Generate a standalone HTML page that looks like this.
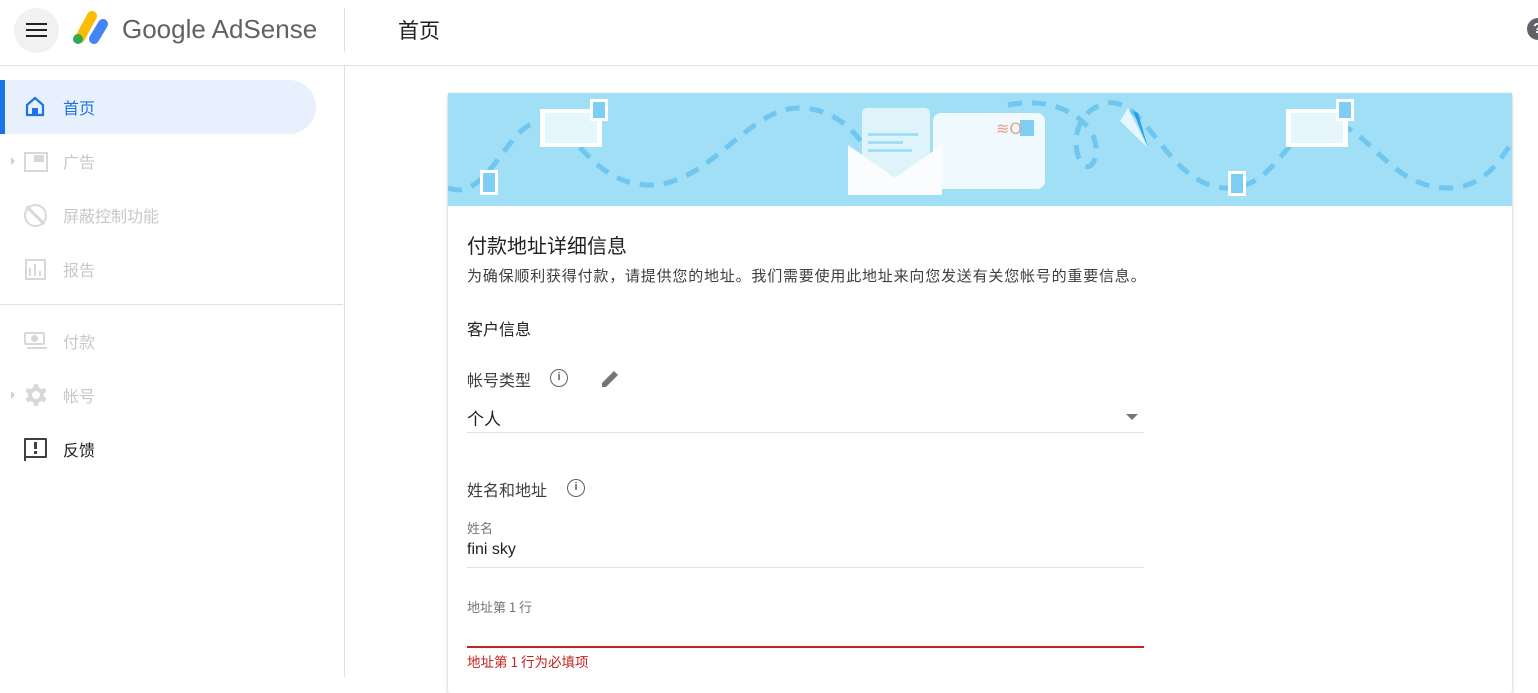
<!DOCTYPE html>
<html><head><meta charset="utf-8"><style>
*{margin:0;padding:0;box-sizing:border-box}
body{width:1538px;height:677px;overflow:hidden;background:#fff;font-family:"Liberation Sans","Noto Sans CJK SC",sans-serif;color:#202124;position:relative}
.a{position:absolute}
.t{position:absolute;white-space:nowrap}
.cjk{font-family:"Noto Sans CJK SC","Liberation Sans",sans-serif}
.nav{font-size:16px;color:#c8c8c8}
</style></head><body>
<!-- header -->
<div class="a" style="left:14px;top:8px;width:45px;height:45px;border-radius:50%;background:#f1f1f1"></div>
<div class="a" style="left:26px;top:23px;width:21px;height:2px;background:#202124"></div>
<div class="a" style="left:26px;top:29px;width:21px;height:2px;background:#202124"></div>
<div class="a" style="left:26px;top:35px;width:21px;height:2px;background:#202124"></div>
<svg class="a" style="left:70px;top:10px" width="40" height="36" viewBox="0 0 40 36"><line x1="22" y1="6" x2="10" y2="28" stroke="#fbbc04" stroke-width="10" stroke-linecap="round"/><line x1="33" y1="14" x2="24" y2="29" stroke="#4285f4" stroke-width="10" stroke-linecap="round"/><circle cx="8" cy="29" r="5" fill="#34a853"/></svg>
<div class="t" style="left:122px;top:14px;font-size:26px;color:#5f6368">Google AdSense</div>
<div class="a" style="left:344px;top:8px;width:1px;height:44px;background:#e0e0e0"></div>
<div class="t cjk" style="left:398px;top:15px;font-size:21px;color:#202124">首页</div>
<div class="a" style="left:1527px;top:18px;width:22px;height:22px;border-radius:50%;background:#5f6368;color:#fff;font-size:15px;font-weight:bold;padding-left:6px;line-height:22px">?</div>
<div class="a" style="left:0;top:65px;width:1538px;height:1px;background:#e0e0e0"></div>
<!-- sidebar -->
<div class="a" style="left:344px;top:66px;width:1px;height:611px;background:#e0e0e0"></div>
<div class="a" style="left:0;top:80px;width:316px;height:54px;background:#e8f0fe;border-radius:0 27px 27px 0"></div>
<div class="a" style="left:0;top:80px;width:5px;height:54px;background:#1a73e8"></div>
<svg class="a" style="left:24px;top:95px" width="22" height="22" viewBox="0 0 22 22"><path d="M3 10 L11 3 L19 10 V20 H3 Z" fill="none" stroke="#1a73e8" stroke-width="2.2"/><rect x="8" y="13" width="6" height="7" fill="#1a73e8"/></svg>
<div class="t cjk" style="left:63px;top:95px;font-size:16px;color:#1a73e8">首页</div>
<div class="a" style="left:11px;top:157px;border-left:4px solid #d0d0d0;border-top:4px solid transparent;border-bottom:4px solid transparent"></div>
<div class="a" style="left:24px;top:152px;width:24px;height:20px;border:2px solid #d8d8d8"></div>
<div class="a" style="left:34px;top:155px;width:10px;height:7px;background:#d8d8d8"></div>
<div class="t cjk nav" style="left:63px;top:149px">广告</div>
<div class="a" style="left:24px;top:204px;width:23px;height:23px;border:2.5px solid #d8d8d8;border-radius:50%"></div>
<div class="a" style="left:34px;top:203px;width:2.5px;height:25px;background:#d8d8d8;transform:rotate(-45deg)"></div>
<div class="t cjk nav" style="left:63px;top:203px">屏蔽控制功能</div>
<div class="a" style="left:25px;top:259px;width:21px;height:21px;border:2px solid #d8d8d8"></div>
<div class="a" style="left:29px;top:268px;width:2px;height:8px;background:#d8d8d8"></div>
<div class="a" style="left:34px;top:264px;width:2px;height:12px;background:#d8d8d8"></div>
<div class="a" style="left:39px;top:271px;width:2px;height:5px;background:#d8d8d8"></div>
<div class="t cjk nav" style="left:63px;top:257px">报告</div>
<div class="a" style="left:0;top:304px;width:343px;height:1px;background:#e0e0e0"></div>
<div class="a" style="left:24px;top:332px;width:21px;height:13px;border:2.5px solid #d8d8d8;border-radius:2px"></div>
<div class="a" style="left:31px;top:335px;width:7px;height:7px;background:#d8d8d8;border-radius:50%"></div>
<div class="a" style="left:27px;top:347px;width:20px;height:2px;background:#d8d8d8"></div>
<div class="t cjk nav" style="left:63px;top:329px">付款</div>
<div class="a" style="left:11px;top:391px;border-left:4px solid #d0d0d0;border-top:4px solid transparent;border-bottom:4px solid transparent"></div>
<div class="a" style="left:25px;top:384px;width:22px;height:22px;border:5px dotted #d8d8d8;border-radius:50%"></div>
<div class="a" style="left:28px;top:387px;width:16px;height:16px;border:4px solid #d8d8d8;border-radius:50%"></div>
<div class="t cjk nav" style="left:63px;top:383px">帐号</div>
<div class="a" style="left:24px;top:438px;width:23px;height:20px;border:2px solid #3c4043;border-radius:1px"></div>
<div class="a" style="left:24px;top:456px;width:2px;height:5px;background:#3c4043"></div>
<div class="a" style="left:34px;top:442px;width:2.5px;height:7px;background:#3c4043"></div>
<div class="a" style="left:34px;top:451px;width:2.5px;height:2.5px;background:#3c4043"></div>
<div class="t cjk" style="left:63px;top:437px;font-size:16px;color:#202124">反馈</div>
<!-- card -->
<div class="a" style="left:448px;top:93px;width:1064px;height:600px;background:#fff;box-shadow:0 1px 3px rgba(0,0,0,.25);border-radius:2px"></div>
<div class="a" style="left:448px;top:93px;width:1064px;height:113px;background:#a0dff6;overflow:hidden">
<svg width="1064" height="113" viewBox="0 0 1064 113">
<path d="M0 95 C40 110 60 30 90 30 C130 30 140 90 200 92 C260 94 300 15 350 15 C400 15 420 60 420 60" fill="none" stroke="#6fc7f0" stroke-width="5" stroke-dasharray="14 10"/>
<path d="M560 12 C620 0 660 40 645 70 C630 90 610 20 660 10 C700 5 720 95 780 95 C830 95 840 30 880 30 C920 30 940 95 1000 95 C1040 95 1055 60 1064 50" fill="none" stroke="#6fc7f0" stroke-width="5" stroke-dasharray="14 10"/>
<rect x="92" y="16" width="62" height="38" fill="#fff"/><rect x="97" y="20" width="52" height="30" fill="#e6f6fd"/>
<rect x="142" y="6" width="18" height="22" fill="#fff"/><rect x="145" y="9" width="12" height="16" fill="#7dcdf5"/>
<rect x="32" y="77" width="18" height="25" fill="#fff"/><rect x="35" y="80" width="12" height="19" fill="#7dcdf5"/>
<rect x="838" y="16" width="62" height="38" fill="#fff"/><rect x="843" y="20" width="52" height="30" fill="#e6f6fd"/>
<rect x="888" y="6" width="18" height="22" fill="#fff"/><rect x="891" y="9" width="12" height="16" fill="#7dcdf5"/>
<rect x="780" y="78" width="18" height="25" fill="#fff"/><rect x="783" y="81" width="12" height="19" fill="#7dcdf5"/>
<rect x="485" y="20" width="112" height="76" rx="8" fill="#f0f9fd"/>
<rect x="572" y="27" width="14" height="16" fill="#7dcdf5"/>
<text x="548" y="41" font-size="16" fill="#e8a08a" font-family="DejaVu Sans">≋O</text>
<rect x="414" y="15" width="68" height="80" rx="5" fill="#dff3fb"/>
<rect x="420" y="40" width="50" height="3" fill="#a0dff6"/><rect x="420" y="48" width="35" height="3" fill="#a0dff6"/><rect x="420" y="56" width="44" height="3" fill="#a0dff6"/>
<path d="M400 52 L447 85 L494 52 V102 H400 Z" fill="#fafcfd"/>
<path d="M680 15 L700 55 L672 28 Z" fill="#e6f6fd"/><path d="M685 18 L700 55 L690 20Z" fill="#2a9ee6"/>
</svg></div>
<div class="t cjk" style="left:467px;top:230px;font-size:20px;color:#202124">付款地址详细信息</div>
<div class="t cjk" style="left:467px;top:265px;font-size:15px;color:#3c4043;letter-spacing:0.8px">为确保顺利获得付款，请提供您的地址。我们需要使用此地址来向您发送有关您帐号的重要信息。</div>
<div class="t cjk" style="left:467px;top:316px;font-size:16px;color:#202124">客户信息</div>
<div class="t cjk" style="left:467px;top:367px;font-size:16px;color:#3c4043">帐号类型</div>
<div class="a" style="left:550px;top:369px;width:18px;height:18px;border:1.8px solid #5f6368;border-radius:50%;font-size:11px;text-align:center;line-height:15px;color:#5f6368;font-weight:bold">i</div>
<svg class="a" style="left:599px;top:368px" width="22" height="22" viewBox="0 0 22 22"><path d="M3 19 L3 15 L15 3 L19 7 L7 19 Z" fill="#757575"/></svg>
<div class="t cjk" style="left:467px;top:405px;font-size:17px;color:#202124">个人</div>
<div class="a" style="left:1126px;top:414px;border-top:6px solid #757575;border-left:6px solid transparent;border-right:6px solid transparent"></div>
<div class="a" style="left:467px;top:432px;width:677px;height:1px;background:#e0e0e0"></div>
<div class="t cjk" style="left:467px;top:477px;font-size:16px;color:#3c4043">姓名和地址</div>
<div class="a" style="left:567px;top:479px;width:18px;height:18px;border:1.8px solid #5f6368;border-radius:50%;font-size:11px;text-align:center;line-height:15px;color:#5f6368;font-weight:bold">i</div>
<div class="t cjk" style="left:467px;top:518px;font-size:13px;color:#757575">姓名</div>
<div class="t" style="left:467px;top:541px;font-size:16px;color:#202124">fini sky</div>
<div class="a" style="left:467px;top:567px;width:677px;height:1px;background:#e0e0e0"></div>
<div class="t cjk" style="left:467px;top:597px;font-size:13px;color:#757575">地址第 1 行</div>
<div class="a" style="left:467px;top:646px;width:677px;height:2px;background:#c5221f"></div>
<div class="t cjk" style="left:467px;top:651px;font-size:13.5px;color:#c5221f">地址第 1 行为必填项</div>
</body></html>
